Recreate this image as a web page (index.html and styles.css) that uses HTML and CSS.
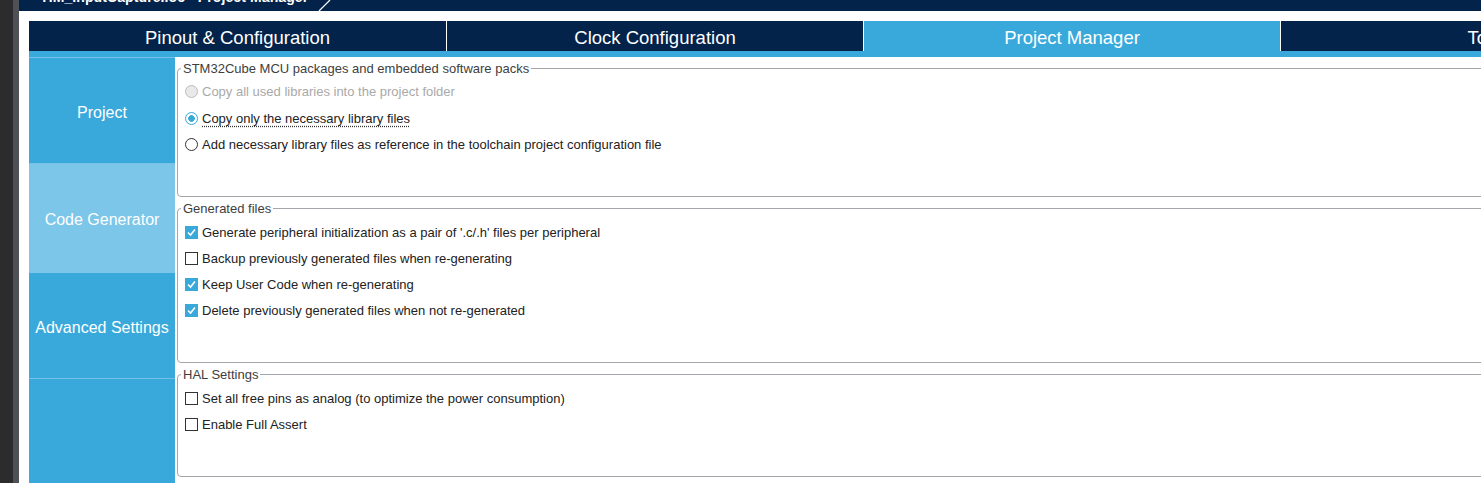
FILE: index.html
```html
<!DOCTYPE html>
<html lang="en">
<head>
<meta charset="utf-8">
<title>TIM_InputCapture.ioc - Project Manager</title>
<link rel="stylesheet" href="styles.css">
</head>
<body>
<div class="app">
  <div class="rail-dark"></div>
  <div class="rail-gray"></div>
  <div class="main">
    <div class="titlebar">
      <div class="doc-tab">
        <span class="doc-title">TIM_InputCapture.ioc - Project Manager</span>
        <svg class="doc-slant" width="14" height="11" viewBox="0 0 14 11"><line x1="12" y1="0" x2="1" y2="11" stroke="#ffffff" stroke-width="1.2"/></svg>
      </div>
    </div>
    <div class="workspace">
      <nav class="tabs">
        <div class="tab w1">Pinout &amp; Configuration</div>
        <div class="tab w2">Clock Configuration</div>
        <div class="tab w2 active">Project Manager</div>
        <div class="tab w2">Tools</div>
      </nav>
      <div class="strip"></div>
      <div class="body">
        <aside class="sidebar">
          <div class="nav-item">Project</div>
          <div class="nav-item selected">Code Generator</div>
          <div class="nav-item">Advanced Settings</div>
        </aside>
        <section class="content">
          <fieldset class="group first">
            <legend>STM32Cube MCU packages and embedded software packs</legend>
            <div class="opt disabled"><span class="radio off-dis"></span><span>Copy all used libraries into the project folder</span></div>
            <div class="opt tall"><span class="radio on"></span><span class="focus">Copy only the necessary library files</span></div>
            <div class="opt"><span class="radio"></span><span>Add necessary library files as reference in the toolchain project configuration file</span></div>
          </fieldset>
          <fieldset class="group">
            <legend>Generated files</legend>
            <div class="opt"><span class="check on"><svg width="11" height="11" viewBox="0 0 11 11"><polyline points="2,5.5 4.5,8 9,2.5" fill="none" stroke="#ffffff" stroke-width="1.6"/></svg></span><span>Generate peripheral initialization as a pair of '.c/.h' files per peripheral</span></div>
            <div class="opt"><span class="check"></span><span>Backup previously generated files when re-generating</span></div>
            <div class="opt"><span class="check on"><svg width="11" height="11" viewBox="0 0 11 11"><polyline points="2,5.5 4.5,8 9,2.5" fill="none" stroke="#ffffff" stroke-width="1.6"/></svg></span><span>Keep User Code when re-generating</span></div>
            <div class="opt"><span class="check on"><svg width="11" height="11" viewBox="0 0 11 11"><polyline points="2,5.5 4.5,8 9,2.5" fill="none" stroke="#ffffff" stroke-width="1.6"/></svg></span><span>Delete previously generated files when not re-generated</span></div>
          </fieldset>
          <fieldset class="group">
            <legend>HAL Settings</legend>
            <div class="opt"><span class="check"></span><span>Set all free pins as analog (to optimize the power consumption)</span></div>
            <div class="opt"><span class="check"></span><span>Enable Full Assert</span></div>
          </fieldset>
        </section>
      </div>
    </div>
  </div>
</div>
</body>
</html>
```

FILE: styles.css
```css
html, body {
  margin: 0;
  height: 100%;
  overflow: hidden;
}
body {
  font-family: "Liberation Sans", Arial, sans-serif;
  background: #ffffff;
}
.app {
  display: flex;
  height: 483px;
}
.rail-dark {
  width: 13px;
  flex-shrink: 0;
  background: #2c2c2c;
}
.rail-gray {
  width: 6px;
  flex-shrink: 0;
  background: #4e5256;
}
.main {
  flex: 1;
  min-width: 0;
  display: flex;
  flex-direction: column;
  background: #ffffff;
}
.titlebar {
  height: 11px;
  flex-shrink: 0;
  background: #03234b;
  overflow: hidden;
  display: flex;
}
.doc-tab {
  display: flex;
  align-items: flex-start;
  padding-left: 21px;
}
.doc-title {
  font-size: 14px;
  font-weight: bold;
  line-height: 14px;
  color: #ffffff;
  white-space: nowrap;
  margin-top: -10px;
  letter-spacing: 0.1px;
}
.doc-slant {
  margin-left: 10px;
  flex-shrink: 0;
}
.workspace {
  flex: 1;
  min-height: 0;
  display: flex;
  flex-direction: column;
  padding: 10px 0 0 10px;
}
.tabs {
  display: flex;
  gap: 1px;
  height: 30px;
  flex-shrink: 0;
  overflow: hidden;
}
.tab {
  flex-shrink: 0;
  box-sizing: border-box;
  background: #03234b;
  color: #ffffff;
  font-size: 18.5px;
  padding-top: 3px;
  display: flex;
  align-items: center;
  justify-content: center;
  white-space: nowrap;
}
.tab.w1 { width: 417px; }
.tab.w2 { width: 416px; }
.tab.active { background: #39a9db; }
.strip {
  height: 6px;
  flex-shrink: 0;
  background: #39a9db;
}
.body {
  flex: 1;
  min-height: 0;
  display: flex;
}
.sidebar {
  width: 146px;
  flex-shrink: 0;
  background: #39a9db;
  border-top: 1px solid #74c2e8;
}
.nav-item {
  box-sizing: border-box;
  height: 106px;
  border-bottom: 1px solid #74c2e8;
  padding-top: 4px;
  display: flex;
  align-items: center;
  justify-content: center;
  color: #ffffff;
  font-size: 16px;
  white-space: nowrap;
}
.nav-item.selected {
  height: 109px;
  background: #7cc6e9;
  border-bottom-color: #7cc6e9;
}
.content {
  flex: 1;
  min-width: 0;
  overflow: hidden;
  padding-left: 2px;
}
.group {
  margin: 4px -40px 0 0;
  padding: 3px 0 39px 3px;
  border: 1px solid #a3a7ab;
  border-radius: 4px;
  min-width: 0;
}
.group.first {
  padding-top: 2px;
}
.group legend {
  padding: 0 2px;
  font-size: 13px;
  line-height: 15px;
  color: #3e3e3e;
}
.opt {
  display: flex;
  align-items: center;
  gap: 4px;
  height: 26px;
  margin-left: 4px;
  font-size: 13px;
  color: #222222;
  white-space: nowrap;
}
.opt.tall {
  height: 27px;
  padding-top: 1px;
  box-sizing: border-box;
}
.opt.disabled { color: #a9a9a9; }
.focus {
  text-decoration-line: underline;
  text-decoration-style: dotted;
  text-decoration-color: #333333;
  text-underline-offset: 3px;
}
.radio {
  width: 13px;
  height: 13px;
  box-sizing: border-box;
  border-radius: 50%;
  border: 1px solid #333333;
  background: #ffffff;
  flex-shrink: 0;
}
.radio.off-dis {
  border-color: #bcbcbc;
  background: #e9e9e9;
}
.radio.on {
  border-color: #39a9db;
  background: radial-gradient(circle, #39a9db 0 3px, #ffffff 3.6px);
}
.check {
  width: 13px;
  height: 13px;
  box-sizing: border-box;
  border: 1px solid #333333;
  background: #ffffff;
  flex-shrink: 0;
  display: flex;
  align-items: center;
  justify-content: center;
}
.check.on {
  background: #39a9db;
  border-color: #39a9db;
}
.check svg { display: block; }
```
